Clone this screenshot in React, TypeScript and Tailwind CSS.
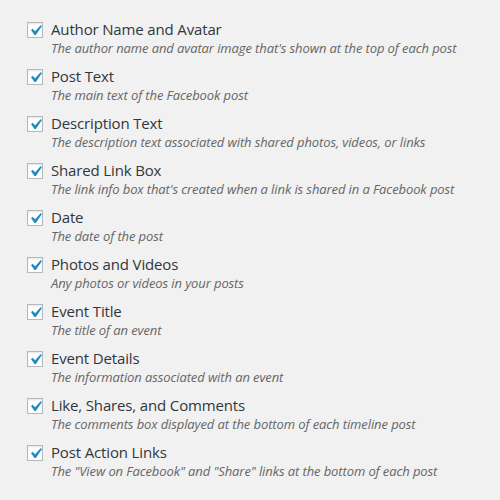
import React from "react";

const items: [string, string][] = [
  ["Author Name and Avatar", "The author name and avatar image that's shown at the top of each post"],
  ["Post Text", "The main text of the Facebook post"],
  ["Description Text", "The description text associated with shared photos, videos, or links"],
  ["Shared Link Box", "The link info box that's created when a link is shared in a Facebook post"],
  ["Date", "The date of the post"],
  ["Photos and Videos", "Any photos or videos in your posts"],
  ["Event Title", "The title of an event"],
  ["Event Details", "The information associated with an event"],
  ["Like, Shares, and Comments", "The comments box displayed at the bottom of each timeline post"],
  ["Post Action Links", "The \"View on Facebook\" and \"Share\" links at the bottom of each post"],
];

function Check() {
  return (
    <div className="relative w-4 h-4 shrink-0 border border-[#b4b9be] bg-[#fefefe] shadow-[inset_0_1px_2px_rgba(0,0,0,0.1)]">
      <svg className="absolute left-[-3px] top-[-3px]" width="21" height="21" viewBox="0 0 20 20">
        <path d="M14.83 4.89l1.34.94-5.81 8.38H9.02L5.78 9.67l1.34-1.25 2.57 2.4z" fill="#1e8cbe" />
      </svg>
    </div>
  );
}

export default function App() {
  return (
    <div className="w-[500px] h-[500px] bg-[#f1f1f1] pt-[22px] pl-[27px]" style={{ fontFamily: '"Open Sans", sans-serif' }}>
      <div className="flex flex-col">
        {items.map(([t, d]) => (
          <div key={t} className="flex h-[47px]">
            <Check />
            <div className="ml-2 -mt-[3px]">
              <div className="text-[15px] leading-[20px] tracking-[-0.15px] text-[#32373c]">{t}</div>
              <div className="text-[13px] leading-[18px] tracking-[-0.1px] italic text-[#666]">{d}</div>
            </div>
          </div>
        ))}
      </div>
    </div>
  );
}
